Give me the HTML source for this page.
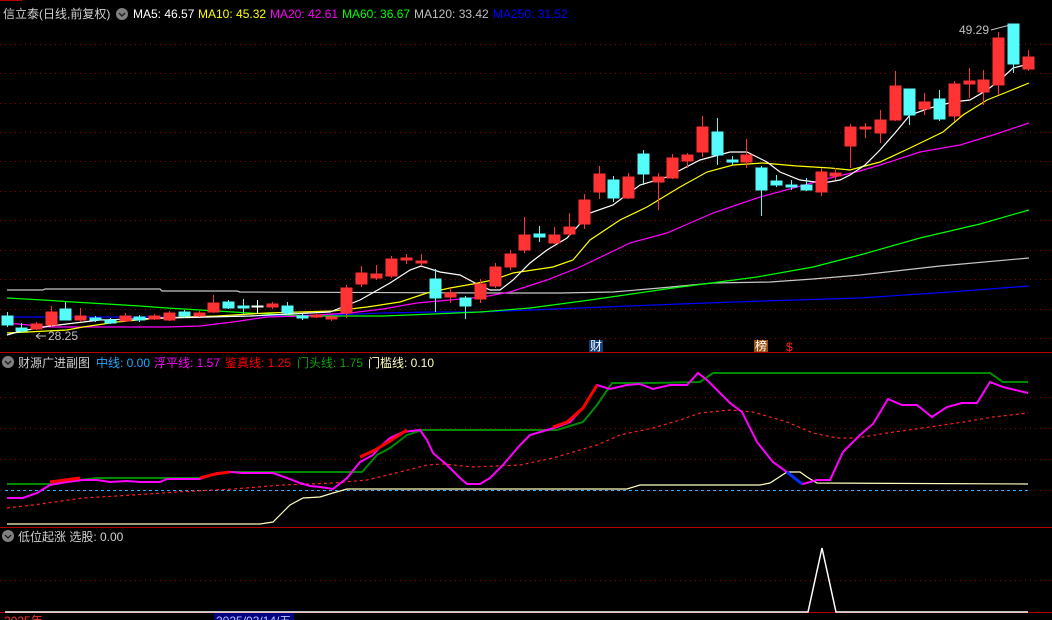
<!DOCTYPE html>
<html><head><meta charset="utf-8"><style>
html,body{margin:0;padding:0;background:#000;width:1052px;height:620px;overflow:hidden}
svg{display:block}
text{font-family:"Liberation Sans","Noto Sans CJK SC",sans-serif;font-size:12px}
</style></head><body>
<svg width="1052" height="620" viewBox="0 0 1052 620" xmlns="http://www.w3.org/2000/svg">
<rect width="1052" height="620" fill="#000"/>
<g stroke="#b00000" stroke-width="1" shape-rendering="crispEdges">
<line x1="0" y1="352.5" x2="1052" y2="352.5"/>
<line x1="0" y1="527.5" x2="1052" y2="527.5"/>
<line x1="0" y1="612.5" x2="1052" y2="612.5"/>
<line x1="0" y1="0.5" x2="22" y2="0.5"/>
</g>
<g stroke="#900000" stroke-width="1" stroke-dasharray="1,4" shape-rendering="crispEdges">
<line x1="0" y1="44.5" x2="1052" y2="44.5"/><line x1="0" y1="73.5" x2="1052" y2="73.5"/>
<line x1="0" y1="103.5" x2="1052" y2="103.5"/><line x1="0" y1="132.5" x2="1052" y2="132.5"/>
<line x1="0" y1="161.5" x2="1052" y2="161.5"/><line x1="0" y1="191.5" x2="1052" y2="191.5"/>
<line x1="0" y1="220.5" x2="1052" y2="220.5"/><line x1="0" y1="250.5" x2="1052" y2="250.5"/>
<line x1="0" y1="279.5" x2="1052" y2="279.5"/><line x1="0" y1="309.5" x2="1052" y2="309.5"/>
<line x1="0" y1="338.5" x2="1052" y2="338.5"/>
<line x1="0" y1="397.5" x2="1052" y2="397.5"/><line x1="0" y1="428.5" x2="1052" y2="428.5"/>
<line x1="0" y1="459.5" x2="1052" y2="459.5"/>
<line x1="1030" y1="490.5" x2="1052" y2="490.5"/>
<line x1="0" y1="580.5" x2="1052" y2="580.5"/>
</g>
<g fill="none" stroke-width="1.2">
<polyline stroke="#c8c8c8" points="7,290 43,290 45,289 160,289 162,291 237,291 240,292 500,293 560,293 613,292 660,288 713,283 770,282 813,279 860,275 940,266 1029,258"/>
<polyline stroke="#0000ff" points="7,317 200,317 250,316 333,315 383,313 433,312 480,312 580,308 680,304 763,301 860,298 950,292 1029,286"/>
<polyline stroke="#00ff00" points="7,298 43,300 73,302 107,304 140,306 167,308 200,310 233,312 267,314 307,316 383,316 433,314 480,312 530,308 590,300 673,288 757,277 813,267 860,255 920,238 980,224 1029,210"/>
<polyline stroke="#ff00ff" points="7,323 50,327 167,327 200,326 233,322 267,317 300,316 350,313 383,309 417,303 450,300 483,297 510,292 547,280 580,267 630,243 667,233 713,213 760,197 797,187 830,178 860,171 880,165 920,152 960,145 993,135 1029,123"/>
<polyline stroke="#ffff00" points="7,333 67,330 83,327 117,322 160,318 217,316 267,313 333,311 367,307 400,302 427,293 450,288 473,284 493,280 513,273 553,267 573,260 590,240 620,220 647,207 680,187 707,172 733,165 763,163 797,166 830,168 850,170 880,162 910,148 943,132 963,115 987,100 1007,92 1029,83"/>
<polyline stroke="#ffffff" points="7,335 21,331 50,326 100,320 167,318 250,316 330,312 360,300 390,283 410,270 421,266 440,272 460,275 475,283 490,290 500,290 513,280 530,263 547,250 567,238 590,213 613,205 640,185 667,177 700,160 730,152 747,152 767,162 780,172 800,180 823,183 840,180 850,175 865,165 880,150 895,133 910,115 930,108 953,102 970,100 987,90 1000,80 1013,68 1029,64"/>
</g>
<g shape-rendering="crispEdges" stroke-width="1">
<g fill="#54fcfc" stroke="#54fcfc">
<line x1="7.5" y1="312" x2="7.5" y2="327"/><rect x="2" y="316" width="11" height="9"/>
<line x1="21.5" y1="323" x2="21.5" y2="333"/><rect x="16" y="328" width="11" height="3"/>
<line x1="65.5" y1="302" x2="65.5" y2="320"/><rect x="60" y="309" width="11" height="11"/>
<line x1="95.5" y1="316" x2="95.5" y2="322"/><rect x="90" y="318" width="11" height="2"/>
<line x1="110.5" y1="318" x2="110.5" y2="324"/><rect x="105" y="320" width="11" height="3"/>
<line x1="139.5" y1="315" x2="139.5" y2="322"/><rect x="134" y="317" width="11" height="3"/>
<line x1="184.5" y1="310" x2="184.5" y2="318"/><rect x="179" y="312" width="11" height="4"/>
<line x1="228.5" y1="300" x2="228.5" y2="309"/><rect x="223" y="302" width="11" height="6"/>
<line x1="243.5" y1="299" x2="243.5" y2="314"/><rect x="238" y="306" width="11" height="2"/>
<line x1="287.5" y1="302" x2="287.5" y2="315"/><rect x="282" y="306" width="11" height="7"/>
<line x1="302.5" y1="314" x2="302.5" y2="320"/><rect x="297" y="316" width="11" height="2"/>
<line x1="435.5" y1="269" x2="435.5" y2="312"/><rect x="430" y="279" width="11" height="19"/>
<line x1="465.5" y1="296" x2="465.5" y2="319"/><rect x="460" y="298" width="11" height="8"/>
<line x1="539.5" y1="226" x2="539.5" y2="242"/><rect x="534" y="234" width="11" height="3"/>
<line x1="613.5" y1="176" x2="613.5" y2="202"/><rect x="608" y="180" width="11" height="18"/>
<line x1="643.5" y1="150" x2="643.5" y2="185"/><rect x="638" y="154" width="11" height="20"/>
<line x1="717.5" y1="118" x2="717.5" y2="165"/><rect x="712" y="132" width="11" height="23"/>
<line x1="732.5" y1="156" x2="732.5" y2="165"/><rect x="727" y="160" width="11" height="2"/>
<line x1="761.5" y1="166" x2="761.5" y2="216"/><rect x="756" y="168" width="11" height="22"/>
<line x1="776.5" y1="175" x2="776.5" y2="187"/><rect x="771" y="181" width="11" height="4"/>
<line x1="791.5" y1="180" x2="791.5" y2="190"/><rect x="786" y="185" width="11" height="2"/>
<line x1="806.5" y1="178" x2="806.5" y2="191"/><rect x="801" y="185" width="11" height="5"/>
<line x1="909.5" y1="89" x2="909.5" y2="125"/><rect x="904" y="89" width="11" height="26"/>
<line x1="939.5" y1="90" x2="939.5" y2="121"/><rect x="934" y="99" width="11" height="20"/>
<line x1="1013.5" y1="24" x2="1013.5" y2="73"/><rect x="1008" y="24" width="11" height="40"/>
</g>
<g fill="#ffffff" stroke="#ffffff">
<line x1="257.5" y1="300" x2="257.5" y2="314"/><rect x="252" y="306" width="11" height="1"/>
</g>
<g fill="#ff3333" stroke="#ff3333">
<line x1="36.5" y1="322" x2="36.5" y2="330"/><rect x="31" y="324" width="11" height="5"/>
<line x1="51.5" y1="306" x2="51.5" y2="327"/><rect x="46" y="312" width="11" height="13"/>
<line x1="80.5" y1="308" x2="80.5" y2="322"/><rect x="75" y="316" width="11" height="4"/>
<line x1="125.5" y1="313" x2="125.5" y2="322"/><rect x="120" y="316" width="11" height="5"/>
<line x1="154.5" y1="314" x2="154.5" y2="320"/><rect x="149" y="316" width="11" height="3"/>
<line x1="169.5" y1="311" x2="169.5" y2="321"/><rect x="164" y="313" width="11" height="7"/>
<line x1="199.5" y1="311" x2="199.5" y2="317"/><rect x="194" y="313" width="11" height="3"/>
<line x1="213.5" y1="295" x2="213.5" y2="313"/><rect x="208" y="303" width="11" height="9"/>
<line x1="272.5" y1="302" x2="272.5" y2="309"/><rect x="267" y="304" width="11" height="3"/>
<line x1="316.5" y1="314" x2="316.5" y2="318"/><rect x="311" y="315" width="11" height="2"/>
<line x1="331.5" y1="315" x2="331.5" y2="321"/><rect x="326" y="317" width="11" height="2"/>
<line x1="346.5" y1="285" x2="346.5" y2="318"/><rect x="341" y="288" width="11" height="25"/>
<line x1="361.5" y1="266" x2="361.5" y2="287"/><rect x="356" y="273" width="11" height="11"/>
<line x1="376.5" y1="265" x2="376.5" y2="280"/><rect x="371" y="274" width="11" height="4"/>
<line x1="391.5" y1="256" x2="391.5" y2="278"/><rect x="386" y="259" width="11" height="17"/>
<line x1="406.5" y1="254" x2="406.5" y2="264"/><rect x="401" y="258" width="11" height="2"/>
<line x1="421.5" y1="254" x2="421.5" y2="266"/><rect x="416" y="261" width="11" height="2"/>
<line x1="450.5" y1="288" x2="450.5" y2="303"/><rect x="445" y="293" width="11" height="4"/>
<line x1="480.5" y1="279" x2="480.5" y2="303"/><rect x="475" y="284" width="11" height="15"/>
<line x1="495.5" y1="263" x2="495.5" y2="288"/><rect x="490" y="267" width="11" height="19"/>
<line x1="510.5" y1="250" x2="510.5" y2="270"/><rect x="505" y="254" width="11" height="13"/>
<line x1="524.5" y1="217" x2="524.5" y2="253"/><rect x="519" y="235" width="11" height="15"/>
<line x1="554.5" y1="227" x2="554.5" y2="244"/><rect x="549" y="235" width="11" height="8"/>
<line x1="569.5" y1="213" x2="569.5" y2="236"/><rect x="564" y="227" width="11" height="7"/>
<line x1="584.5" y1="194" x2="584.5" y2="229"/><rect x="579" y="200" width="11" height="24"/>
<line x1="599.5" y1="166" x2="599.5" y2="199"/><rect x="594" y="174" width="11" height="18"/>
<line x1="628.5" y1="173" x2="628.5" y2="199"/><rect x="623" y="177" width="11" height="21"/>
<line x1="658.5" y1="173" x2="658.5" y2="210"/><rect x="653" y="177" width="11" height="5"/>
<line x1="672.5" y1="154" x2="672.5" y2="179"/><rect x="667" y="158" width="11" height="20"/>
<line x1="687.5" y1="153" x2="687.5" y2="168"/><rect x="682" y="155" width="11" height="6"/>
<line x1="702.5" y1="116" x2="702.5" y2="157"/><rect x="697" y="127" width="11" height="25"/>
<line x1="746.5" y1="139" x2="746.5" y2="168"/><rect x="741" y="155" width="11" height="7"/>
<line x1="821.5" y1="168" x2="821.5" y2="196"/><rect x="816" y="172" width="11" height="20"/>
<line x1="835.5" y1="168" x2="835.5" y2="180"/><rect x="830" y="173" width="11" height="3"/>
<line x1="850.5" y1="124" x2="850.5" y2="168"/><rect x="845" y="127" width="11" height="19"/>
<line x1="865.5" y1="123" x2="865.5" y2="138"/><rect x="860" y="127" width="11" height="2"/>
<line x1="880.5" y1="110" x2="880.5" y2="143"/><rect x="875" y="120" width="11" height="13"/>
<line x1="895.5" y1="71" x2="895.5" y2="121"/><rect x="890" y="86" width="11" height="34"/>
<line x1="924.5" y1="93" x2="924.5" y2="115"/><rect x="919" y="102" width="11" height="7"/>
<line x1="954.5" y1="81" x2="954.5" y2="121"/><rect x="949" y="84" width="11" height="32"/>
<line x1="969.5" y1="68" x2="969.5" y2="98"/><rect x="964" y="81" width="11" height="3"/>
<line x1="983.5" y1="70" x2="983.5" y2="105"/><rect x="978" y="80" width="11" height="12"/>
<line x1="998.5" y1="32" x2="998.5" y2="95"/><rect x="993" y="38" width="11" height="47"/>
<line x1="1028.5" y1="50" x2="1028.5" y2="71"/><rect x="1023" y="57" width="11" height="12"/>
</g>
</g>
<text x="959" y="34" fill="#c0c0c0">49.29</text>
<line x1="991" y1="30" x2="1010" y2="25" stroke="#c0c0c0"/>
<text x="48" y="340" fill="#c0c0c0">28.25</text>
<path d="M36,336 L46,336 M36,336 L40,333 M36,336 L40,339" stroke="#c0c0c0" fill="none"/>
<rect x="589" y="340" width="14" height="12" fill="#10407a"/>
<text x="590" y="350" fill="#ffffff" font-size="11">财</text>
<rect x="754" y="340" width="14" height="12" fill="#9a4f10"/>
<text x="755" y="350" fill="#ffffff" font-size="11">榜</text>
<text x="786" y="351" fill="#ff2020" font-size="11">$</text>
<text x="3" y="18" fill="#d0d0d0" font-size="13">信立泰(日线,前复权)</text>
<circle cx="122" cy="14" r="6" fill="#808080"/>
<path d="M119,13 L122,16 L125,13" stroke="#222" stroke-width="1.5" fill="none"/>
<text x="133" y="18" fill="#ffffff">MA5: 46.57</text>
<text x="198" y="18" fill="#ffff00">MA10: 45.32</text>
<text x="270" y="18" fill="#ff00ff">MA20: 42.61</text>
<text x="342" y="18" fill="#00ff00">MA60: 36.67</text>
<text x="414" y="18" fill="#c0c0c0">MA120: 33.42</text>
<text x="493" y="18" fill="#0000ff">MA250: 31.52</text>
<circle cx="8" cy="362" r="6" fill="#808080"/>
<path d="M5,361 L8,364 L11,361" stroke="#222" stroke-width="1.5" fill="none"/>
<text x="18" y="367" fill="#d0d0d0">财源广进副图</text>
<text x="96" y="367" fill="#20a8ff">中线: 0.00</text>
<text x="154" y="367" fill="#ff00ff">浮平线: 1.57</text>
<text x="225" y="367" fill="#ff0000">鉴真线: 1.25</text>
<text x="297" y="367" fill="#10a010">门头线: 1.75</text>
<text x="368" y="367" fill="#ffffc0">门槛线: 0.10</text>
<line x1="5" y1="490.5" x2="1030" y2="490.5" stroke="#30b0ff" stroke-dasharray="3,3"/>
<g fill="none">
<polyline stroke="#ffffc0" stroke-width="1.2" points="7,524 260,524 273,522 283,512 290,505 303,498 320,497 333,493 347,489 627,489 640,485 760,485 770,483 787,472 800,472 807,477 817,483 1028,484"/>
<polyline stroke="#ff2020" stroke-width="1.2" stroke-dasharray="3,3" points="7,508 33,505 83,498 133,495 177,492 233,489 283,485 333,483 367,480 400,472 427,465 443,464 473,467 520,465 553,458 597,445 620,435 653,428 680,420 700,413 730,410 753,412 787,422 813,433 837,438 857,438 887,433 930,427 963,422 993,417 1028,413"/>
<polyline stroke="#008a00" stroke-width="2" points="7,484 50,484 80,480 97,478 200,478 227,472 362,472 377,455 390,448 407,435 422,430 557,430 583,422 597,405 612,383 653,383 700,382 713,373 990,373 1003,382 1028,382"/>
<polyline stroke="#ff00ff" stroke-width="2" points="7,498 23,498 37,493 50,485 67,482 83,480 97,480 110,482 127,481 140,482 160,482 167,479 200,479 217,473 230,472 243,473 273,473 287,478 300,483 310,486 320,487 333,489 347,478 360,462 373,455 380,447 390,438 403,432 420,430 427,440 433,453 447,465 460,478 467,484 480,484 490,478 503,465 520,445 530,435 547,430 557,427 570,422 583,408 597,385 610,389 627,385 640,384 653,389 670,385 687,385 698,373 707,380 720,393 730,403 742,412 757,442 773,462 787,472 803,484 817,480 830,480 843,452 860,435 873,424 888,399 902,405 917,405 932,417 947,407 962,403 977,403 990,382 1003,387 1028,393"/>
<g stroke="#ff0000" stroke-width="3">
<polyline points="50,482 65,480 80,478"/>
<polyline points="200,478 215,474 230,472"/>
<polyline points="360,457 375,450 390,441 407,430"/>
<polyline points="553,427 567,422 583,408 597,385"/>
</g>
<polyline stroke="#0030ff" stroke-width="3" points="787,472 802,484"/>
</g>
<circle cx="8" cy="536" r="6" fill="#808080"/>
<path d="M5,535 L8,538 L11,535" stroke="#222" stroke-width="1.5" fill="none"/>
<text x="18" y="541" fill="#d0d0d0">低位起涨  选股: 0.00</text>
<polyline fill="none" stroke="#ffffff" stroke-width="1.5" points="5,612 808,612 822,548 836,612 1028,612"/>
<text x="4" y="625" fill="#ff3030" font-size="11">2025年</text>
<rect x="214" y="613" width="80" height="8" fill="#000080"/>
<text x="216" y="625" fill="#c0c0ff" font-size="11">2025/03/14/五</text>
</svg>
</body></html>
